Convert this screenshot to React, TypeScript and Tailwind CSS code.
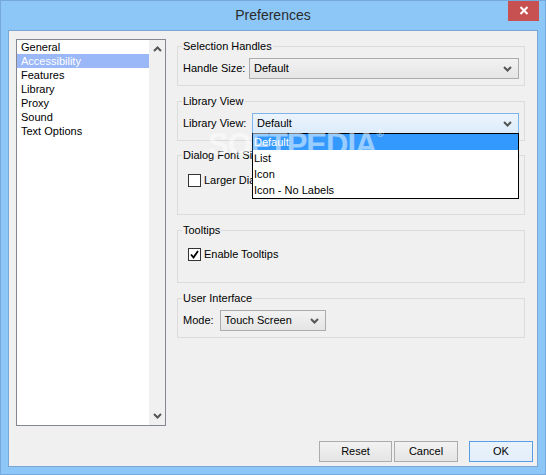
import type { ReactNode } from 'react'

const categories = ['General', 'Accessibility', 'Features', 'Library', 'Proxy', 'Sound', 'Text Options']
const viewOptions = ['Default', 'List', 'Icon', 'Icon - No Labels']

function Chevron({ up = false }: { up?: boolean }) {
  return (
    <svg width="9" height="6" viewBox="0 0 9 6" className="block">
      <polyline
        points={up ? '1,5 4.5,1.5 8,5' : '1,1 4.5,4.5 8,1'}
        fill="none"
        stroke="#555"
        strokeWidth="2"
      />
    </svg>
  )
}

function Select({
  value,
  width,
  focused = false,
  children,
}: {
  value: string
  width: string
  focused?: boolean
  children?: ReactNode
}) {
  return (
    <div className={`relative h-[21px] ${width}`}>
      <div
        className={`h-full flex items-center justify-between pl-[4px] pr-[6px] border ${
          focused
            ? 'border-[#7eb4ea] bg-gradient-to-b from-[#ecf4fc] to-[#dcecfc]'
            : 'border-[#acacac] bg-gradient-to-b from-[#f2f2f2] to-[#e5e5e5]'
        }`}
      >
        <span>{value}</span>
        <Chevron />
      </div>
      {children}
    </div>
  )
}

function Checkbox({ checked, label }: { checked: boolean; label: string }) {
  return (
    <div className="flex items-center gap-[3px] whitespace-nowrap">
      <div className="w-[13px] h-[13px] border border-[#333] bg-white flex items-center justify-center">
        {checked && (
          <svg width="9" height="9" viewBox="0 0 9 9">
            <polyline points="1,4.5 3.5,7.5 8,1" fill="none" stroke="#000" strokeWidth="1.8" />
          </svg>
        )}
      </div>
      <span>{label}</span>
    </div>
  )
}

function Group({
  title,
  height,
  className = '',
  children,
}: {
  title: string
  height: string
  className?: string
  children: ReactNode
}) {
  return (
    <div className={`relative border border-[#dcdcdc] ${height} ${className}`}>
      <span className="absolute -top-[8px] left-[4px] px-[1px] bg-[#f0f0f0] leading-[14px] whitespace-nowrap">
        {title}
      </span>
      {children}
    </div>
  )
}

function Button({ label, width, primary = false }: { label: string; width: string; primary?: boolean }) {
  return (
    <button
      type="button"
      className={`h-[21px] ${width} border text-center ${
        primary
          ? 'border-[#569de5] bg-gradient-to-b from-[#eaf3fc] to-[#e3eefa]'
          : 'border-[#acacac] bg-gradient-to-b from-[#f2f2f2] to-[#e5e5e5]'
      }`}
    >
      {label}
    </button>
  )
}

export default function App() {
  return (
    <div className="relative w-[546px] h-[475px] bg-[#8cc7f8] border border-[#75a9dd] flex flex-col font-['Liberation_Sans',Arial,sans-serif] text-[11px] text-black overflow-hidden">
      {/* Title bar */}
      <div className="relative h-[29px] shrink-0">
        <div className="text-center text-[14px] leading-[29px] text-[#2b2b2b]">Preferences</div>
        <div className="absolute -top-[1px] right-[6px] w-[31px] h-[21px] bg-[#c75050] flex items-center justify-center">
          <svg width="10" height="9" viewBox="0 0 10 9">
            <path d="M1.5 1 L8.5 8 M8.5 1 L1.5 8" stroke="#fff" strokeWidth="2" />
          </svg>
        </div>
      </div>

      {/* Client area */}
      <div className="flex-1 mx-[7px] mb-[7px] bg-[#f0f0f0] border border-[#7aa6d3] flex flex-col pt-[8px] pl-[7px] pr-[5px]">
        <div className="flex">
          {/* Category list */}
          <div className="w-[150px] h-[387px] border border-[#828790] bg-white flex">
            <div className="flex-1">
              {categories.map((c) => (
                <div
                  key={c}
                  className={`h-[14px] leading-[14px] pl-[4px] ${
                    c === 'Accessibility' ? 'bg-[#9ab7f7] text-white' : ''
                  }`}
                >
                  {c}
                </div>
              ))}
            </div>
            <div className="w-[16px] bg-[#f0f0f0] flex flex-col justify-between items-center py-[6px]">
              <Chevron up />
              <Chevron />
            </div>
          </div>

          {/* Settings */}
          <div className="ml-[11px] w-[348px] flex flex-col gap-[15px] pt-[7px]">
            <Group title="Selection Handles" height="h-[40px]">
              <div className="flex items-center justify-between pt-[11px] pl-[5px] pr-[5px]">
                <span>Handle Size:</span>
                <Select value="Default" width="w-[270px]" />
              </div>
            </Group>

            <Group title="Library View" height="h-[40px]">
              <div className="relative z-10 flex items-center justify-between pt-[11px] pl-[5px] pr-[5px]">
                <span>Library View:</span>
                <Select value="Default" width="w-[267px]" focused>
                  <div className="absolute top-[20px] left-0 w-full border border-black bg-white">
                    {viewOptions.map((o) => (
                      <div
                        key={o}
                        className={`h-[16px] leading-[16px] pl-[1px] ${
                          o === 'Default' ? 'bg-[#3399ff] text-white' : ''
                        }`}
                      >
                        {o}
                      </div>
                    ))}
                  </div>
                </Select>
              </div>
            </Group>

            <Group title="Dialog Font Size" height="h-[60px]" className="-mt-[1px]">
              <div className="pt-[16px] pl-[10px]">
                <Checkbox checked={false} label="Larger Dialog Fonts" />
              </div>
            </Group>

            <Group title="Tooltips" height="h-[53px]">
              <div className="pt-[15px] pl-[10px]">
                <Checkbox checked label="Enable Tooltips" />
              </div>
            </Group>

            <Group title="User Interface" height="h-[40px]">
              <div className="flex items-center gap-[6px] pt-[11px] pl-[5px]">
                <span>Mode:</span>
                <Select value="Touch Screen" width="w-[106px]" />
              </div>
            </Group>
          </div>
        </div>

        {/* Buttons */}
        <div className="flex justify-end mt-[15px] -mr-[1px]">
          <Button label="Reset" width="w-[73px]" />
          <div className="w-[2px]" />
          <Button label="Cancel" width="w-[64px]" />
          <div className="w-[11px]" />
          <Button label="OK" width="w-[64px]" primary />
        </div>
      </div>

      {/* watermark */}
      <div className="absolute left-[207px] top-[128px] z-20 pointer-events-none select-none text-[31px] font-bold tracking-[-1px] text-white/50 leading-none font-['Liberation_Sans',Arial,sans-serif]">
        SOFTPEDIA<span className="text-[10px] align-top">®</span>
      </div>
    </div>
  )
}
